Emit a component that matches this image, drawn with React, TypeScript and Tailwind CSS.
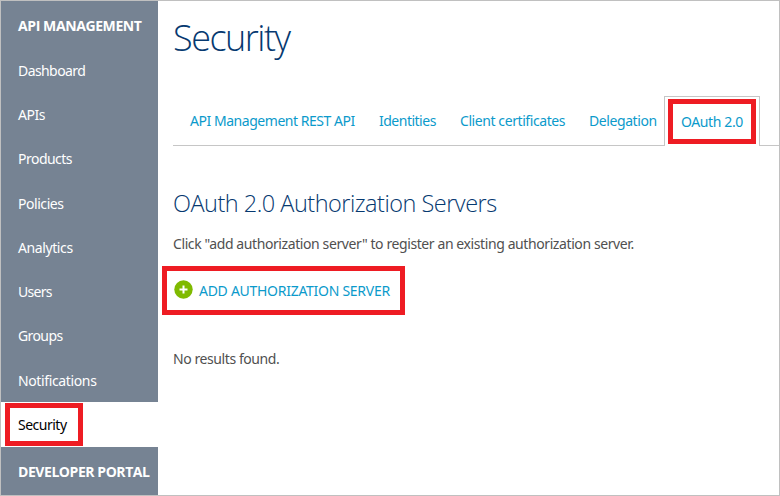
import React from "react";

const navItems = [
  { label: "Dashboard", spacing: "tracking-[-0.58px]" },
  { label: "APIs", spacing: "tracking-[-0.5px]" },
  { label: "Products", spacing: "tracking-[-0.52px]" },
  { label: "Policies", spacing: "tracking-[-0.45px]" },
  { label: "Analytics", spacing: "tracking-[-0.4px]" },
  { label: "Users", spacing: "tracking-[-0.7px]" },
  { label: "Groups", spacing: "tracking-[-0.6px]" },
  { label: "Notifications", spacing: "tracking-[-0.37px]" },
];

const tabs = [
  { label: "API Management REST API", box: "w-[189px]", spacing: "tracking-[-0.46px]" },
  { label: "Identities", box: "w-[81px]", spacing: "tracking-[-0.5px]" },
  { label: "Client certificates", box: "w-[129px]", spacing: "tracking-[-0.42px]" },
  { label: "Delegation", box: "w-[75px]", spacing: "tracking-[-0.42px]" },
];

function Sidebar() {
  return (
    <nav className="flex w-[157px] shrink-0 flex-col whitespace-nowrap bg-[#768393] text-white">
      <h2 className="flex h-[47px] items-center pl-[17px] pt-[3px] font-['Open_Sans',sans-serif] text-[14px] font-bold tracking-[-0.4px]">
        API MANAGEMENT
      </h2>
      {navItems.map((item) => (
        <a key={item.label} className={`flex h-[44.35px] items-center pl-[17px] pt-[1.2px] ${item.spacing}`}>
          {item.label}
        </a>
      ))}
      <a className="flex h-[45px] items-center bg-white pl-1 text-black">
        <span className="flex h-[43px] w-[78px] items-center border-[5px] border-[#ee1c23] pl-2 tracking-[-0.5px]">
          Security
        </span>
      </a>
      <h2 className="flex h-[48px] items-center pl-[17px] pt-[2px] font-['Open_Sans',sans-serif] text-[14px] font-bold tracking-[-0.44px]">
        DEVELOPER PORTAL
      </h2>
    </nav>
  );
}

function TabBar() {
  return (
    <div className="flex h-[50px] whitespace-nowrap text-[#0b9acb]">
      <div className="flex w-[491px] items-center border-b border-[#c6c6c6] pl-[17px] pt-px">
        {tabs.map((tab) => (
          <a key={tab.label} className={`shrink-0 ${tab.box} ${tab.spacing}`}>
            {tab.label}
          </a>
        ))}
      </div>
      <div className="w-[96px] border-x border-t border-[#c6c6c6] pl-[3px] pt-[2px]">
        <a className="flex h-[45px] w-[88px] items-center border-[5px] border-[#ee1c23] pl-2 pt-px tracking-[-0.38px]">
          OAuth 2.0
        </a>
      </div>
      <div className="flex-1 border-b border-[#c6c6c6]" />
    </div>
  );
}

export default function App() {
  return (
    <div className="flex h-[496px] w-[780px] overflow-hidden border border-[#c0c0c0] bg-white font-['Noto_Sans','Open_Sans',sans-serif] text-[14px] leading-5">
      <Sidebar />
      <main className="flex min-w-0 flex-1 flex-col whitespace-nowrap pl-[15px] text-[#505050]">
        <h1 className="flex h-[95px] items-start pt-[13px] font-['Open_Sans',sans-serif] text-[36px] font-light leading-[48px] tracking-[-1.5px] text-[#063970]">
          Security
        </h1>
        <TabBar />
        <h2 className="mt-[41px] h-[33px] font-['Open_Sans',sans-serif] text-[23.5px] font-light leading-[32px] tracking-[-0.5px] text-[#063970]">
          OAuth 2.0 Authorization Servers
        </h2>
        <p className="mt-[14px] tracking-[-0.405px]">
          Click "add authorization server" to register an existing authorization server.
        </p>
        <a className="-ml-[11px] mt-[12px] flex h-[49px] w-[243px] items-center border-[5px] border-[#ee1c23] pl-[7px] text-[#0b9acb]">
          <svg className="mb-[2px] mr-[6px] shrink-0" width="19" height="19" viewBox="0 0 19 19">
            <circle cx="9.5" cy="9.5" r="9.2" fill="#7fba00" />
            <path d="M9.5 5.5v8M5.5 9.5h8" stroke="white" strokeWidth="2" />
          </svg>
          <span className="tracking-[-0.28px]">ADD AUTHORIZATION SERVER</span>
        </a>
        <p className="mt-[34px] tracking-[-0.42px]">No results found.</p>
      </main>
    </div>
  );
}
